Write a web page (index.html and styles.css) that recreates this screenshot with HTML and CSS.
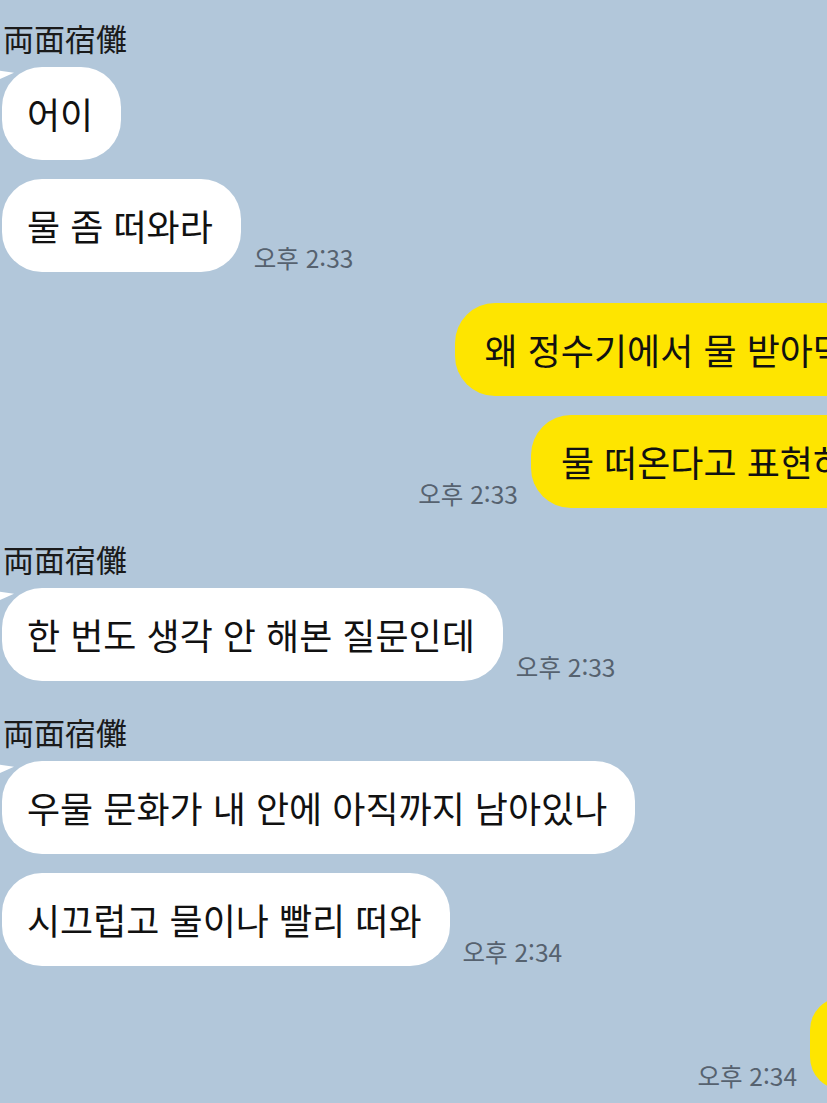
FILE: index.html
```html
<!DOCTYPE html>
<html lang="ko">
<head>
<meta charset="UTF-8">
<title>채팅</title>
<link rel="stylesheet" href="styles.css">
</head>
<body>
<div class="chat">
	<div class="group them">
		<div class="name">両面宿儺</div>
		<div class="row"><div class="bubble first">어이</div></div>
		<div class="row"><div class="bubble">물 좀 떠와라</div><span class="time">오후 2:33</span></div>
	</div>
	<div class="group me">
		<div class="row"><div class="bubble first">왜 정수기에서 물 받아먹</div></div>
		<div class="row"><span class="time">오후 2:33</span><div class="bubble">물 떠온다고 표현하</div></div>
	</div>
	<div class="group them">
		<div class="name">両面宿儺</div>
		<div class="row"><div class="bubble first">한 번도 생각 안 해본 질문인데</div><span class="time">오후 2:33</span></div>
	</div>
	<div class="group them">
		<div class="name">両面宿儺</div>
		<div class="row"><div class="bubble first">우물 문화가 내 안에 아직까지 남아있나</div></div>
		<div class="row"><div class="bubble">시끄럽고 물이나 빨리 떠와</div><span class="time">오후 2:34</span></div>
	</div>
	<div class="group me">
		<div class="row"><span class="time">오후 2:34</span><div class="bubble first blank"></div></div>
	</div>
</div>
</body>
</html>
```
FILE: styles.css
```css
body{
	margin: 0;
	background: #b2c7da;
	overflow: hidden;
	font-family: "Noto Sans CJK KR", "Noto Sans", sans-serif;
	color: #111;
}
.chat{
	width: 874px;
	padding: 18px 0 0 2px;
	display: flex;
	flex-direction: column;
	gap: 31px;
}
.group{
	display: flex;
	flex-direction: column;
	gap: 19px;
}
.name{
	font-size: 31px;
	line-height: 40px;
	margin: 0 0 -10px 1px;
	color: #1a1a1a;
}
.row{
	display: flex;
	align-items: flex-end;
	gap: 13px;
}
.me .row{
	justify-content: flex-end;
}
.bubble{
	position: relative;
	background: #fff;
	font-size: 36px;
	line-height: 45px;
	padding: 24px 28px 24px 25px;
	border-radius: 40px;
	white-space: nowrap;
}
.me .bubble{
	background: #fee500;
	padding: 24px 30px 24px 30px;
}
.them .bubble.first:before{
	content: '';
	position: absolute;
	top: 4px;
	left: -12px;
	border-style: solid;
	border-width: 0 0 14px 24px;
	border-color: transparent transparent transparent #fff;
	transform: skewY(8deg);
}
.bubble.blank{
	width: 6px;
	height: 45px;
	padding: 24px 30px;
}
.time{
	font-size: 24.5px;
	line-height: 28px;
	color: #56626f;
	white-space: nowrap;
}
```
